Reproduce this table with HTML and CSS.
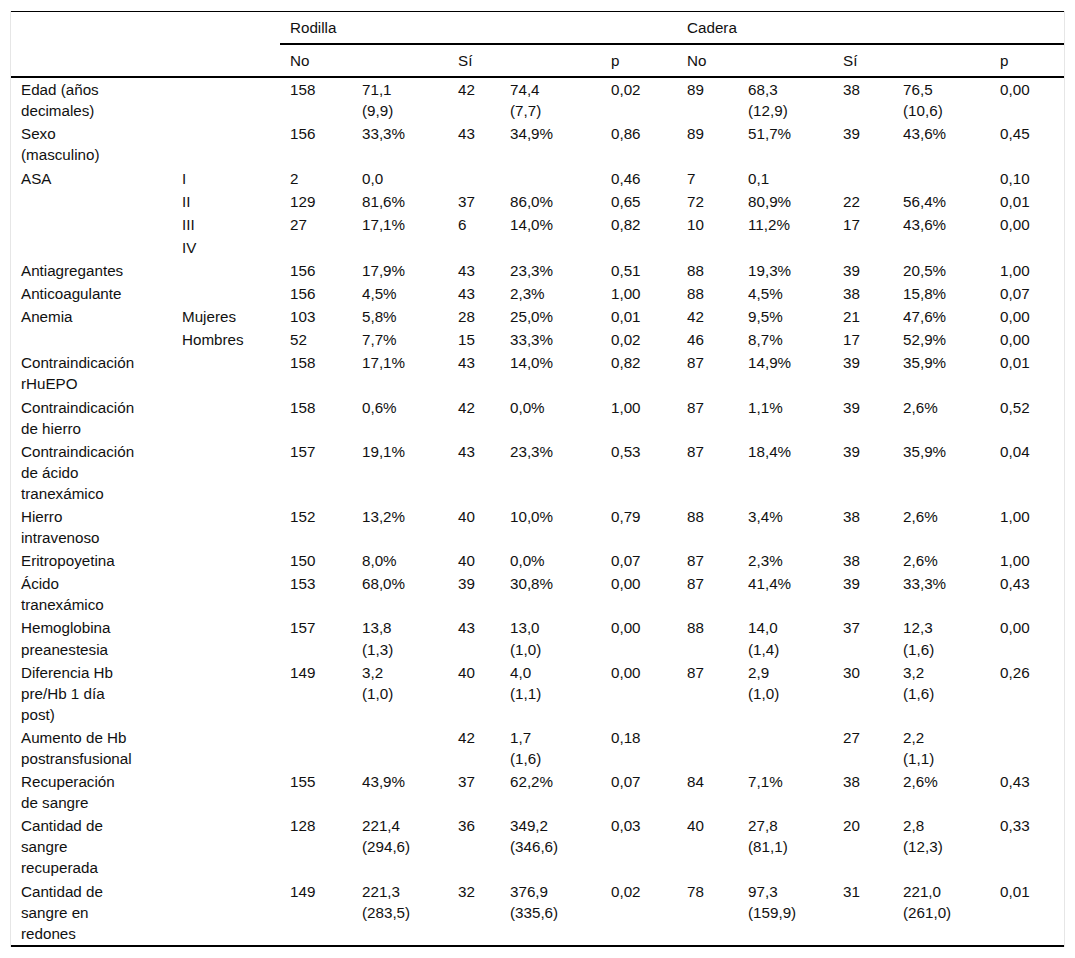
FILE: index.html
```html
<!DOCTYPE html>
<html lang="es">
<head>
<meta charset="utf-8">
<title>Tabla</title>
<link rel="stylesheet" href="styles.css">
</head>
<body>
<div class="table-wrap">
<table class="data">
<colgroup>
<col class="c1"><col class="c2"><col class="c3"><col class="c4"><col class="c5"><col class="c6"><col class="c7"><col class="c8"><col class="c9"><col class="c10"><col class="c11"><col class="c12">
</colgroup>
<thead>
<tr class="h1">
<th rowspan="2" class="ruled"></th>
<th rowspan="2" class="ruled"></th>
<th colspan="5" class="ruled">Rodilla</th>
<th colspan="5" class="ruled">Cadera</th>
</tr>
<tr class="h2">
<th colspan="2" class="ruled">No</th>
<th colspan="2" class="ruled">Sí</th>
<th class="ruled">p</th>
<th colspan="2" class="ruled">No</th>
<th colspan="2" class="ruled">Sí</th>
<th class="ruled">p</th>
</tr>
</thead>
<tbody>
<tr><td class="label">Edad (años decimales)</td><td></td><td>158</td><td>71,1 <span class="sd">(9,9)</span></td><td>42</td><td>74,4 <span class="sd">(7,7)</span></td><td>0,02</td><td>89</td><td>68,3 <span class="sd">(12,9)</span></td><td>38</td><td>76,5 <span class="sd">(10,6)</span></td><td>0,00</td></tr>
<tr><td class="label">Sexo (masculino)</td><td></td><td>156</td><td>33,3%</td><td>43</td><td>34,9%</td><td>0,86</td><td>89</td><td>51,7%</td><td>39</td><td>43,6%</td><td>0,45</td></tr>
<tr><td class="label">ASA</td><td>I</td><td>2</td><td>0,0</td><td></td><td></td><td>0,46</td><td>7</td><td>0,1</td><td></td><td></td><td>0,10</td></tr>
<tr><td class="label"></td><td>II</td><td>129</td><td>81,6%</td><td>37</td><td>86,0%</td><td>0,65</td><td>72</td><td>80,9%</td><td>22</td><td>56,4%</td><td>0,01</td></tr>
<tr><td class="label"></td><td>III</td><td>27</td><td>17,1%</td><td>6</td><td>14,0%</td><td>0,82</td><td>10</td><td>11,2%</td><td>17</td><td>43,6%</td><td>0,00</td></tr>
<tr><td class="label"></td><td>IV</td><td></td><td></td><td></td><td></td><td></td><td></td><td></td><td></td><td></td><td></td></tr>
<tr><td class="label">Antiagregantes</td><td></td><td>156</td><td>17,9%</td><td>43</td><td>23,3%</td><td>0,51</td><td>88</td><td>19,3%</td><td>39</td><td>20,5%</td><td>1,00</td></tr>
<tr><td class="label">Anticoagulante</td><td></td><td>156</td><td>4,5%</td><td>43</td><td>2,3%</td><td>1,00</td><td>88</td><td>4,5%</td><td>38</td><td>15,8%</td><td>0,07</td></tr>
<tr><td class="label">Anemia</td><td>Mujeres</td><td>103</td><td>5,8%</td><td>28</td><td>25,0%</td><td>0,01</td><td>42</td><td>9,5%</td><td>21</td><td>47,6%</td><td>0,00</td></tr>
<tr><td class="label"></td><td>Hombres</td><td>52</td><td>7,7%</td><td>15</td><td>33,3%</td><td>0,02</td><td>46</td><td>8,7%</td><td>17</td><td>52,9%</td><td>0,00</td></tr>
<tr><td class="label">Contraindicación rHuEPO</td><td></td><td>158</td><td>17,1%</td><td>43</td><td>14,0%</td><td>0,82</td><td>87</td><td>14,9%</td><td>39</td><td>35,9%</td><td>0,01</td></tr>
<tr><td class="label">Contraindicación de hierro</td><td></td><td>158</td><td>0,6%</td><td>42</td><td>0,0%</td><td>1,00</td><td>87</td><td>1,1%</td><td>39</td><td>2,6%</td><td>0,52</td></tr>
<tr><td class="label">Contraindicación de ácido tranexámico</td><td></td><td>157</td><td>19,1%</td><td>43</td><td>23,3%</td><td>0,53</td><td>87</td><td>18,4%</td><td>39</td><td>35,9%</td><td>0,04</td></tr>
<tr><td class="label">Hierro intravenoso</td><td></td><td>152</td><td>13,2%</td><td>40</td><td>10,0%</td><td>0,79</td><td>88</td><td>3,4%</td><td>38</td><td>2,6%</td><td>1,00</td></tr>
<tr><td class="label">Eritropoyetina</td><td></td><td>150</td><td>8,0%</td><td>40</td><td>0,0%</td><td>0,07</td><td>87</td><td>2,3%</td><td>38</td><td>2,6%</td><td>1,00</td></tr>
<tr><td class="label">Ácido tranexámico</td><td></td><td>153</td><td>68,0%</td><td>39</td><td>30,8%</td><td>0,00</td><td>87</td><td>41,4%</td><td>39</td><td>33,3%</td><td>0,43</td></tr>
<tr><td class="label">Hemoglobina preanestesia</td><td></td><td>157</td><td>13,8 <span class="sd">(1,3)</span></td><td>43</td><td>13,0 <span class="sd">(1,0)</span></td><td>0,00</td><td>88</td><td>14,0 <span class="sd">(1,4)</span></td><td>37</td><td>12,3 <span class="sd">(1,6)</span></td><td>0,00</td></tr>
<tr><td class="label">Diferencia Hb pre/Hb 1 día post)</td><td></td><td>149</td><td>3,2 <span class="sd">(1,0)</span></td><td>40</td><td>4,0 <span class="sd">(1,1)</span></td><td>0,00</td><td>87</td><td>2,9 <span class="sd">(1,0)</span></td><td>30</td><td>3,2 <span class="sd">(1,6)</span></td><td>0,26</td></tr>
<tr><td class="label">Aumento de Hb postransfusional</td><td></td><td></td><td></td><td>42</td><td>1,7 <span class="sd">(1,6)</span></td><td>0,18</td><td></td><td></td><td>27</td><td>2,2 <span class="sd">(1,1)</span></td><td></td></tr>
<tr><td class="label">Recuperación de sangre</td><td></td><td>155</td><td>43,9%</td><td>37</td><td>62,2%</td><td>0,07</td><td>84</td><td>7,1%</td><td>38</td><td>2,6%</td><td>0,43</td></tr>
<tr><td class="label">Cantidad de sangre recuperada</td><td></td><td>128</td><td>221,4 <span class="sd">(294,6)</span></td><td>36</td><td>349,2 <span class="sd">(346,6)</span></td><td>0,03</td><td>40</td><td>27,8 <span class="sd">(81,1)</span></td><td>20</td><td>2,8 <span class="sd">(12,3)</span></td><td>0,33</td></tr>
<tr><td class="label">Cantidad de sangre en redones</td><td></td><td>149</td><td>221,3 <span class="sd">(283,5)</span></td><td>32</td><td>376,9 <span class="sd">(335,6)</span></td><td>0,02</td><td>78</td><td>97,3 <span class="sd">(159,9)</span></td><td>31</td><td>221,0 <span class="sd">(261,0)</span></td><td>0,01</td></tr>
</tbody>
</table>
</div>
</body>
</html>
```
FILE: styles.css
```css
html, body {
  margin: 0;
  padding: 0;
  background: #ffffff;
}

body {
  font-family: "Liberation Sans", Arial, sans-serif;
  font-size: 15.2px;
  line-height: 21.1px;
  color: #111111;
}

.table-wrap {
  margin: 11px 10px 0 10px;
  border-left: 1px solid #e6e6e6;
  border-right: 1px solid #e6e6e6;
}

.data {
  width: 100%;
  table-layout: fixed;
  border-collapse: separate;
  border-spacing: 0;
  border-top: 1px solid #000;
  border-bottom: 2px solid #000;
}

.c1 { width: 161px; }
.c2 { width: 108px; }
.c3 { width: 72px; }
.c4 { width: 96px; }
.c5 { width: 52px; }
.c6 { width: 101px; }
.c7 { width: 76px; }
.c8 { width: 61px; }
.c9 { width: 95px; }
.c10 { width: 60px; }
.c11 { width: 97px; }
.c12 { width: 74px; }

.data th,
.data td {
  text-align: left;
  vertical-align: top;
  padding: 1px 10px;
  font-weight: normal;
}

.data th {
  padding-top: 5px;
  padding-bottom: 5px;
}

.data th.ruled {
  border-bottom: 2px solid #000;
}

.data td.label {
  padding-right: 39px;
}

.sd {
  display: block;
}
```
